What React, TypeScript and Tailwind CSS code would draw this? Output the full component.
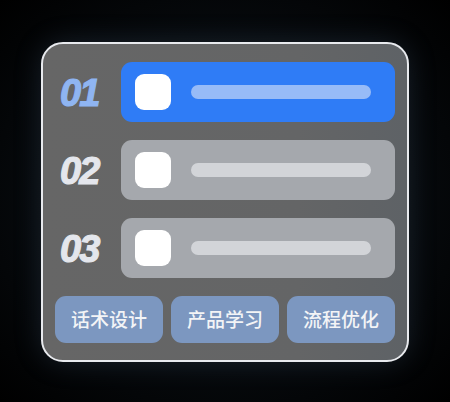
import React from "react";

const rows = [
  { n: "01", active: true },
  { n: "02", active: false },
  { n: "03", active: false },
];

const tags = ["话术设计", "产品学习", "流程优化"];

export default function App() {
  return (
    <div
      className="w-[450px] h-[402px] flex items-center justify-center bg-[radial-gradient(ellipse_at_center,#0d1319_0%,#06090c_60%,#000000_100%)]"
      style={{ fontFamily: '"Noto Sans CJK SC", "Liberation Sans", sans-serif' }}
    >
      <div className="w-[368px] h-[320px] mt-[2px] rounded-[22px] border-2 border-[#e8eaee] bg-[linear-gradient(90deg,#666666_0%,#646566_70%,#5e6266_100%)] shadow-[0_0_28px_rgba(90,120,150,0.22)] px-[12px] pt-[18px] pb-[15px] flex flex-col">
        <div className="flex flex-col gap-[18px]">
          {rows.map((r) => (
            <div key={r.n} className="flex items-center h-[60px]">
              <div
                className={`w-[66px] pl-[5px] pt-[2px] text-[38px] leading-none font-bold italic tracking-[-2px] [-webkit-text-stroke:1.2px_currentColor] ${
                  r.active ? "text-[#8fb5f2]" : "text-[#e4e6ec]"
                }`}
                style={{ fontFamily: '"Liberation Sans", Arial, sans-serif' }}
              >
                {r.n}
              </div>
              <div
                className={`flex-1 h-[60px] rounded-[11px] flex items-center pl-[14px] pr-[24px] gap-[20px] ${
                  r.active ? "bg-[#2f7cf6]" : "bg-[#a5a8ad]"
                }`}
              >
                <div className="w-[36px] h-[36px] rounded-[9px] bg-white shrink-0" />
                <div
                  className={`flex-1 h-[14px] rounded-full ${
                    r.active ? "bg-[#97bbf7]" : "bg-[#d2d4d8]"
                  }`}
                />
              </div>
            </div>
          ))}
        </div>
        <div className="mt-[18px] grid grid-cols-3 gap-[8px]">
          {tags.map((t) => (
            <div
              key={t}
              className="h-[47px] rounded-[11px] bg-[#7c97c0] flex items-center justify-center text-[19px] text-[#f3f4f6] font-medium"
            >
              {t}
            </div>
          ))}
        </div>
      </div>
    </div>
  );
}
